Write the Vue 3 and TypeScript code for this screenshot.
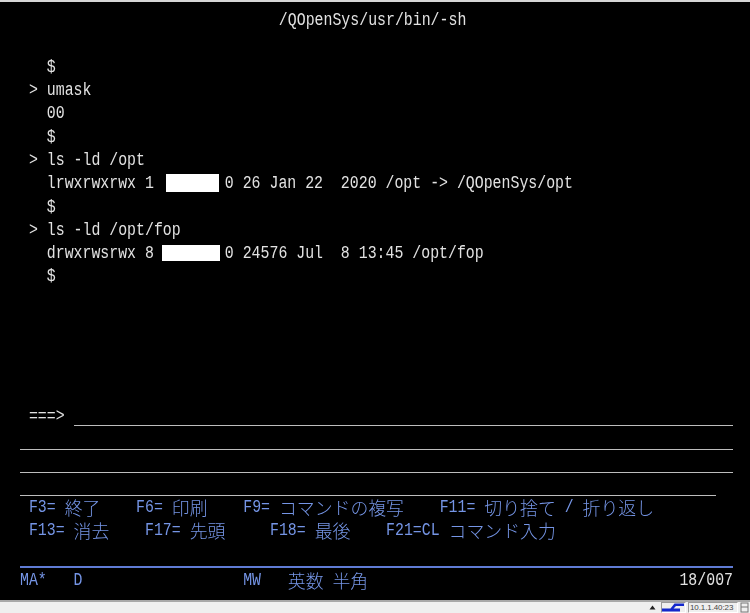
<script setup lang="ts">
type Seg = { t: string; c?: boolean };
const s = (t: string): Seg => ({ t });
const j = (t: string): Seg => ({ t, c: true });

const title = ' '.repeat(29) + '/QOpenSys/usr/bin/-sh';
const topRows: string[] = ['', '   $', ' > umask', '   00', '   $', ' > ls -ld /opt'];
const row7a = '   lrwxrwxrwx 1 ';
const row7b = '0 26 Jan 22  2020 /opt -> /QOpenSys/opt';
const row8 = '   $';
const row9 = ' > ls -ld /opt/fop';
const row10a = '   drwxrwsrwx 8 ';
const row10b = '0 24576 Jul  8 13:45 /opt/fop';
const row11 = '   $';
const prompt = ' ===>';

const fn1: Seg[] = [s(' F3= '), j('終了'), s('    F6= '), j('印刷'), s('    F9= '), j('コマンドの複写'), s('    F11= '), j('切り捨て'), s(' / '), j('折り返し')];
const fn2: Seg[] = [s(' F13= '), j('消去'), s('    F17= '), j('先頭'), s('     F18= '), j('最後'), s('    F21=CL '), j('コマンド入力')];
const stat: Seg[] = [s('MA*   D' + ' '.repeat(18) + 'MW' + ' '.repeat(3)), j('英数'), s(' '), j('半角')];
</script>

<template>
  <div class="page">
    <div class="topline"></div>
    <main class="screen">
      <div class="row"><span class="lat">{{ title }}</span></div>
      <div v-for="(r, i) in topRows" :key="i" class="row"><span class="lat">{{ r }}</span></div>
      <div class="row"><span class="lat">{{ row7a }}</span><span class="redact one"></span><span class="lat">{{ row7b }}</span></div>
      <div class="row"><span class="lat">{{ row8 }}</span></div>
      <div class="row"><span class="lat">{{ row9 }}</span></div>
      <div class="row"><span class="lat">{{ row10a }}</span><span class="redact two"></span><span class="lat">{{ row10b }}</span></div>
      <div class="row"><span class="lat">{{ row11 }}</span></div>
      <div class="gap"></div>
      <div class="row input-row"><span class="lat">{{ prompt }}</span><span class="field"></span></div>
      <div class="row line"></div>
      <div class="row line"></div>
      <div class="row line short"></div>
      <div class="row blue fn-a"><span v-for="(g, i) in fn1" :key="i" :class="g.c ? 'cjk' : 'lat'">{{ g.t }}</span></div>
      <div class="row blue fn-b"><span v-for="(g, i) in fn2" :key="i" :class="g.c ? 'cjk' : 'lat'">{{ g.t }}</span></div>
      <div class="status">
        <div class="row blue"><span v-for="(g, i) in stat" :key="i" :class="g.c ? 'cjk' : 'lat'">{{ g.t }}</span></div>
        <div class="row"><span class="lat">18/007</span></div>
      </div>
    </main>
    <footer class="bar">
      <svg class="up" width="7" height="5" viewBox="0 0 7 5"><path d="M3.5 0.5 L6.5 4.5 H0.5 Z" fill="#222" /></svg>
      <div class="cell conn">
        <svg width="23" height="9" viewBox="0 0 23 9">
          <path d="M0 5.5 H8.5 L12.5 0.5 H22 V3 H14 L11.5 5.5 H18 V8.5 H0 Z" fill="#1428cc" />
        </svg>
      </div>
      <div class="cell addr">10.1.1.40:23</div>
      <svg class="lock" width="9" height="11" viewBox="0 0 9 11"><rect x="1" y="1" width="7" height="9" fill="none" stroke="#777" /><path d="M1 5 H8" stroke="#777" /></svg>
    </footer>
  </div>
</template>

<style>
html, body { margin: 0; background: #000; }
</style>

<style scoped>
.page {
  width: 750px;
  height: 613px;
  display: flex;
  flex-direction: column;
  background: #000;
  overflow: hidden;
}
.topline { height: 2px; background: #d6d6d6; flex: none; }
.screen {
  flex: 1;
  display: flex;
  flex-direction: column;
  padding: 5px 17px 0 20px;
  min-height: 0;
  color: #e2e2e2;
  filter: blur(0.35px);
}
.row {
  height: 23.3px;
  flex: none;
  display: flex;
  align-items: center;
  padding-top: 3px;
  box-sizing: border-box;
  white-space: pre;
}
.lat {
  display: inline-block;
  font-family: "Liberation Mono", monospace;
  font-size: 14.88px;
  line-height: 18px;
  transform: scaleY(1.22);
}
.cjk {
  display: inline-block;
  font-family: "Noto Sans CJK JP", sans-serif;
  font-size: 17.86px;
  line-height: 18px;
  font-weight: 300;
}
.gap { height: 116.5px; flex: none; }
.field {
  flex: 1;
  align-self: flex-end;
  margin-left: 9px;
  border-bottom: 1px solid #bdbdbd;
}
.line { border-bottom: 1px solid #bdbdbd; }
.short { margin-right: 17px; }
.blue { color: #7595e6; }
.fn-a { margin-top: -2px; }
.fn-b { margin-top: -1px; }
.redact { display: inline-block; height: 18px; background: #fff; flex: none; }
.one { width: 53px; margin: 0 6px 0 3px; }
.two { width: 58px; height: 16px; margin: 0 5px 0 -1px; }
.status {
  display: flex;
  justify-content: space-between;
  margin-top: 26px;
  border-top: 2px solid #5f7bd4;
  height: 31px;
}
.status .row { padding-top: 1px; }
.bar {
  flex: none;
  height: 13px;
  box-sizing: border-box;
  border-top: 2px solid #a8a8a8;
  background: #efefef;
  display: flex;
  align-items: center;
  justify-content: flex-end;
  color: #444;
}
.up { margin-right: 5px; }
.cell { height: 11px; box-sizing: border-box; border: 1px solid #9a9a9a; border-right-color: #fff; border-bottom-color: #fff; display: flex; align-items: center; }
.conn { width: 25px; margin-right: 2px; }
.addr {
  width: 50px;
  font-family: "Liberation Sans", sans-serif;
  font-size: 8px;
  letter-spacing: -0.1px;
  padding-left: 1px;
  margin-right: 2px;
  white-space: nowrap;
}
.lock { margin-right: 1px; }
</style>
